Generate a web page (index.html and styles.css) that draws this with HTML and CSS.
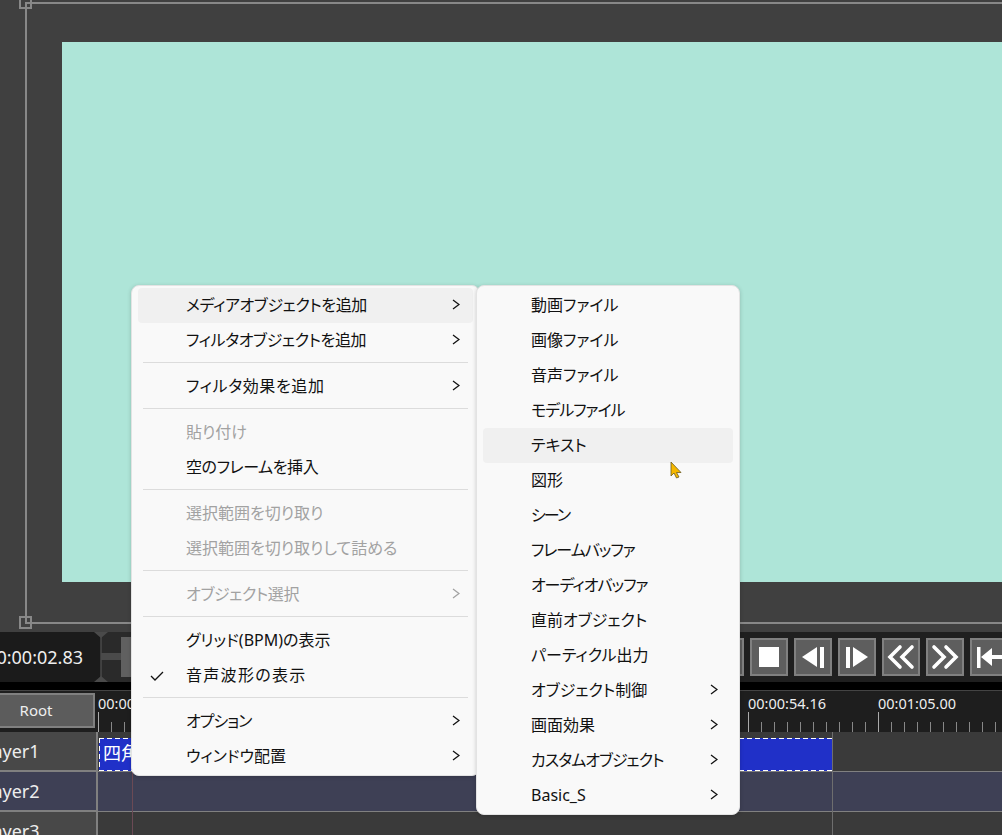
FILE: index.html
```html
<!DOCTYPE html>
<html lang="ja">
<head>
    <meta charset="UTF-8">
    <meta name="viewport" content="width=device-width, initial-scale=1.0">
    <title>Editor</title>
    <link rel="stylesheet" href="styles.css">
</head>
<body>
    <div class="app">
        <div class="preview">
            <div class="scene"></div>
            <div class="guide"></div>
            <div class="handle handle-top"></div>
            <div class="handle handle-bottom"></div>
        </div>

        <div class="transport">
            <div class="time"><span>00:00:02.83</span></div>
            <div class="speed">
                <svg class="speed-marks" width="20" height="50" viewBox="0 0 20 50">
                    <path d="M3 0h14l-7 6zM3 50h14l-7-6z" fill="#4a4a4a"/>
                    <path d="M10 4v42" stroke="#4a4a4a" stroke-width="1.500"/>
                </svg>
                <div class="speed-track"></div>
                <div class="speed-thumb"></div>
            </div>
            <div class="buttons">
                <div class="btn"></div>
                <div class="btn">
                    <svg width="34" height="34" viewBox="0 0 34 34"><rect x="7" y="7" width="20" height="20" fill="#fff"/></svg>
                </div>
                <div class="btn">
                    <svg width="34" height="34" viewBox="0 0 34 34"><path d="M6 17 21 7v20z" fill="#fff"/><rect x="24" y="7" width="4" height="21" fill="#fff"/></svg>
                </div>
                <div class="btn">
                    <svg width="34" height="34" viewBox="0 0 34 34"><rect x="6" y="7" width="4" height="21" fill="#fff"/><path d="M28 17 13 7v20z" fill="#fff"/></svg>
                </div>
                <div class="btn">
                    <svg width="34" height="34" viewBox="0 0 34 34"><path d="M16 7 6 17l10 10M28 7 18 17l10 10" fill="none" stroke="#fff" stroke-width="3.600" stroke-linecap="round"/></svg>
                </div>
                <div class="btn">
                    <svg width="34" height="34" viewBox="0 0 34 34"><path d="M6 7l10 10L6 27M18 7l10 10-10 10" fill="none" stroke="#fff" stroke-width="3.600" stroke-linecap="round"/></svg>
                </div>
                <div class="btn">
                    <svg width="34" height="34" viewBox="0 0 34 34"><rect x="5" y="7" width="3.500" height="21" fill="#fff"/><path d="M9 17 20 8v7h14v4H20v7z" fill="#fff"/></svg>
                </div>
            </div>
        </div>

        <div class="timeline">
            <div class="ruler-row">
                <div class="root-cell"><div class="root-btn">Root</div></div>
                <div class="ruler">
                    <span class="tick-label label-0">00:00:10.83</span>
                    <span class="tick-label label-1">00:00:54.16</span>
                    <span class="tick-label label-2">00:01:05.00</span>
                </div>
            </div>
            <div class="track">
                <div class="track-head"><span>Layer1</span></div>
                <div class="track-body">
                    <div class="clip">四角形</div>
                </div>
            </div>
            <div class="track track-alt">
                <div class="track-head"><span>Layer2</span></div>
                <div class="track-body"></div>
            </div>
            <div class="track">
                <div class="track-head"><span>Layer3</span></div>
                <div class="track-body"></div>
            </div>
            <div class="marker marker-red"></div>
            <div class="marker marker-end"></div>
        </div>
    </div>

    <div class="menu menu-main">
        <div class="item active tight">メディアオブジェクトを追加<svg class="chev"><path d="M1 1l6 4.500L1 10"/></svg></div>
        <div class="item tight">フィルタオブジェクトを追加<svg class="chev"><path d="M1 1l6 4.500L1 10"/></svg></div>
        <div class="sep"></div>
        <div class="item loose">フィルタ効果を追加<svg class="chev"><path d="M1 1l6 4.500L1 10"/></svg></div>
        <div class="sep"></div>
        <div class="item disabled">貼り付け</div>
        <div class="item tight">空のフレームを挿入</div>
        <div class="sep"></div>
        <div class="item disabled">選択範囲を切り取り</div>
        <div class="item disabled">選択範囲を切り取りして詰める</div>
        <div class="sep"></div>
        <div class="item disabled tight">オブジェクト選択<svg class="chev"><path d="M1 1l6 4.500L1 10"/></svg></div>
        <div class="sep"></div>
        <div class="item">グリッド(BPM)の表示</div>
        <div class="item">
            <svg class="check" width="14" height="10" viewBox="0 0 14 10"><path d="M1 5l4 4 8-8"/></svg>
            <span class="wide">音声波形の表示</span>
        </div>
        <div class="sep"></div>
        <div class="item tighter">オプション<svg class="chev"><path d="M1 1l6 4.500L1 10"/></svg></div>
        <div class="item">ウィンドウ配置<svg class="chev"><path d="M1 1l6 4.500L1 10"/></svg></div>
    </div>

    <div class="menu menu-sub">
        <div class="item">動画ファイル</div>
        <div class="item">画像ファイル</div>
        <div class="item">音声ファイル</div>
        <div class="item tighter">モデルファイル</div>
        <div class="item active">テキスト</div>
        <div class="item">図形</div>
        <div class="item tightest">シーン</div>
        <div class="item tighter">フレームバッファ</div>
        <div class="item tighter">オーディオバッファ</div>
        <div class="item">直前オブジェクト</div>
        <div class="item">パーティクル出力</div>
        <div class="item">オブジェクト制御<svg class="chev"><path d="M1 1l6 4.500L1 10"/></svg></div>
        <div class="item">画面効果<svg class="chev"><path d="M1 1l6 4.500L1 10"/></svg></div>
        <div class="item tighter">カスタムオブジェクト<svg class="chev"><path d="M1 1l6 4.500L1 10"/></svg></div>
        <div class="item">Basic_S<svg class="chev"><path d="M1 1l6 4.500L1 10"/></svg></div>
    </div>

    <svg class="cursor" width="14" height="20" viewBox="0 0 14 20">
        <path d="M1 1v14l3-3 2.500 5 2.500-1-2.500-4.500H11z" fill="#f5b800" stroke="#6b5a20" stroke-width="0.800"/>
    </svg>
</body>
</html>
```

FILE: styles.css
```css
* {
    box-sizing: border-box;
}
body {
    margin: 0;
    width: 1002px;
    height: 835px;
    overflow: hidden;
    position: relative;
    background-color: #404040;
    font-family: "Noto Sans", "Noto Sans CJK JP", sans-serif;
}
.app {
    width: 1002px;
    height: 835px;
    overflow: hidden;
}

/* preview area */
.preview {
    position: relative;
    height: 632px;
    padding: 42px 0 0 62px;
    background-color: #404040;
}
.scene {
    height: 540px;
    background-color: #aee5d8;
}
.guide {
    position: absolute;
    left: 25px;
    top: 2px;
    width: 1000px;
    height: 622px;
    border: 2px solid #888;
}
.handle {
    position: absolute;
    left: 19px;
    width: 13px;
    height: 13px;
    border: 2px solid #888;
}
.handle-top {
    top: -4px;
}
.handle-bottom {
    top: 616px;
}

/* transport */
.transport {
    display: flex;
    height: 50px;
    background-color: #1f1f1f;
}
.time {
    flex: 0 0 101px;
    display: flex;
    justify-content: flex-end;
    align-items: center;
    padding-right: 18px;
    overflow: hidden;
    background-color: #1b1b1b;
    border-radius: 0 8px 8px 0;
    color: #eee;
    font-size: 18px;
}
.speed {
    flex: 0 0 605px;
    position: relative;
    background-color: #2a2a2a;
}
.speed-marks {
    position: absolute;
    left: -10px;
    top: 0;
}
.speed-track {
    position: absolute;
    left: 0;
    top: 21px;
    width: 20px;
    height: 7px;
    background-color: #4a4a4a;
}
.speed-thumb {
    position: absolute;
    left: 20px;
    top: 5px;
    width: 14px;
    height: 40px;
    background-color: #606060;
}
.buttons {
    display: flex;
    gap: 6px;
    padding-top: 6px;
    background-color: #1f1f1f;
}
.btn {
    flex: 0 0 38px;
    height: 38px;
    background-color: #5e5e5e;
    border: 2px solid #808080;
}
.btn svg {
    display: block;
}

/* timeline */
.timeline {
    position: relative;
    padding-top: 8px;
    background-color: #000;
}
.ruler-row {
    display: flex;
    height: 42px;
    border-top: 1px solid #444;
    background-color: #1e1e1e;
}
.root-cell {
    flex: 0 0 98px;
    padding: 2px 3px 4px 0;
}
.root-btn {
    height: 35px;
    margin-left: -23px;
    background-color: #5c5c5c;
    border: 2px solid #808080;
    color: #eee;
    font-size: 15px;
    line-height: 31px;
    text-align: center;
}
.ruler {
    flex: 1;
    position: relative;
    background-image:
        repeating-linear-gradient(to right, #aaa 0 1px, transparent 1px 130px),
        repeating-linear-gradient(to right, #888 0 1px, transparent 1px 13px);
    background-size: 100% 20px, 100% 10px;
    background-position: 0 100%, 0 100%;
    background-repeat: no-repeat;
}
.tick-label {
    position: absolute;
    top: 2px;
    color: #eee;
    font-size: 14.500px;
}
.label-0 {
    left: 0;
}
.label-1 {
    left: 650px;
}
.label-2 {
    left: 780px;
}
.track {
    display: flex;
    height: 40px;
    background-color: #3a3a3a;
}
.track-alt {
    background-color: #3e4055;
}
.track-head {
    flex: 0 0 98px;
    overflow: hidden;
    background-color: #484848;
    border: 2px solid #808080;
    border-left: 0;
    border-top-width: 0;
    color: #eee;
    font-size: 18px;
    line-height: 39px;
}
.track-alt .track-head {
    background-color: #3e4055;
}
.track-head span {
    display: block;
    margin-left: -17px;
}
.track-body {
    flex: 1;
    border-bottom: 1px solid #808080;
}
.clip {
    width: 734px;
    height: 33px;
    margin: 6px 0 0 1px;
    padding-left: 4px;
    background-color: #2030c8;
    background-image:
        repeating-linear-gradient(to right, #fff 0 5px, transparent 5px 8px),
        repeating-linear-gradient(to right, #fff 0 5px, transparent 5px 8px),
        repeating-linear-gradient(to bottom, #fff 0 5px, transparent 5px 8px),
        repeating-linear-gradient(to bottom, #fff 0 5px, transparent 5px 8px);
    background-size: 100% 1px, 100% 1px, 1px 100%, 1px 100%;
    background-position: 0 0, 0 100%, 0 0, 100% 0;
    background-repeat: no-repeat;
    color: #fff;
    font-size: 18px;
    line-height: 31px;
    white-space: nowrap;
    overflow: hidden;
}
.marker {
    position: absolute;
    width: 1px;
}
.marker-red {
    left: 132px;
    top: 89px;
    height: 80px;
    background-color: #6b4a55;
}
.marker-end {
    left: 832px;
    top: 50px;
    height: 120px;
    background-color: #6e6e6e;
}

/* context menus */
.menu {
    position: absolute;
    padding: 2px 6px;
    background-color: #f9f9f9;
    border: 1px solid #e3e3e3;
    border-radius: 8px;
    box-shadow: 0 1px 4px rgba(0, 0, 0, 0.18);
    font-size: 16px;
    font-feature-settings: "palt";
    color: #111;
}
.menu-main {
    left: 131px;
    top: 285px;
    width: 349px;
    height: 491px;
}
.menu-sub {
    left: 476px;
    top: 285px;
    width: 264px;
    height: 530px;
}
.item {
    position: relative;
    height: 35px;
    line-height: 34px;
    padding-left: 48px;
    border-radius: 4px;
    white-space: nowrap;
}
.active {
    background-color: #f0f0f0;
}
.disabled {
    color: #a2a2a2;
}
.tight {
    letter-spacing: -0.400px;
}
.tighter {
    letter-spacing: -1px;
}
.tightest {
    letter-spacing: -2px;
}
.loose {
    letter-spacing: 0.600px;
}
.sep {
    height: 1px;
    margin: 4px 5px 6px;
    background-color: #dcdcdc;
}
.chev {
    position: absolute;
    right: 13px;
    top: 11px;
    width: 8px;
    height: 11px;
    fill: none;
    stroke: #111;
    stroke-width: 1.300;
}
.menu-sub .chev {
    right: 15px;
}
.disabled .chev {
    stroke: #a2a2a2;
}
.check {
    position: absolute;
    left: 12px;
    top: 13px;
    fill: none;
    stroke: #111;
    stroke-width: 1.300;
}
.wide {
    letter-spacing: 1.300px;
}
.cursor {
    position: absolute;
    left: 670px;
    top: 461px;
}
```
